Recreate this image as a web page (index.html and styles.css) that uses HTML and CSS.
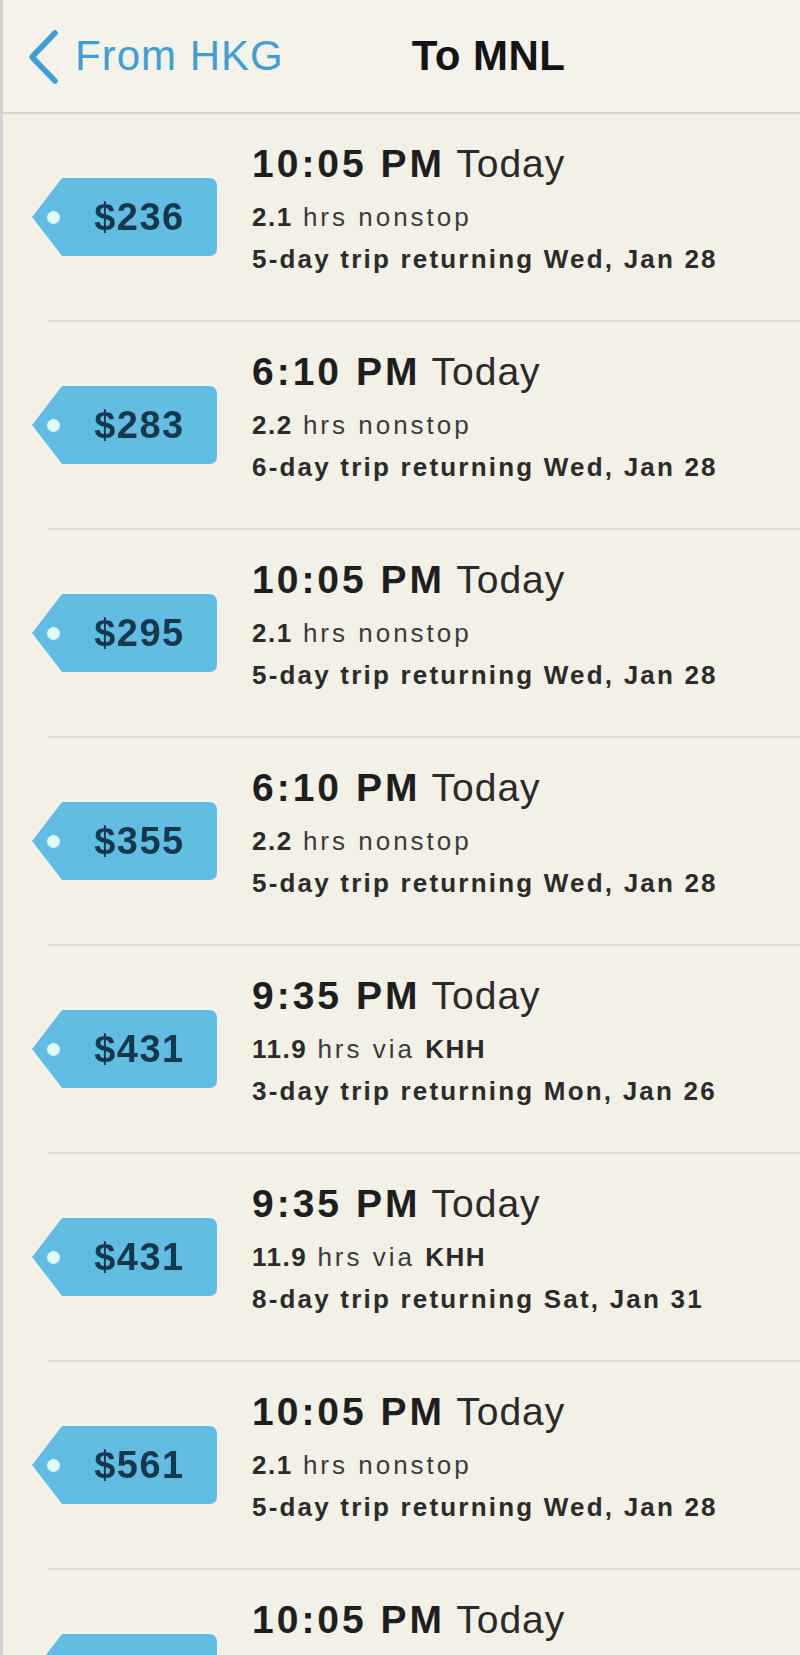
FILE: index.html
```html
<!DOCTYPE html>
<html lang="en">
<head>
<meta charset="utf-8">
<title>To MNL</title>
<link rel="stylesheet" href="styles.css">
</head>
<body>
<div class="app">
  <header class="nav">
    <a class="back">
      <svg class="chev" width="32" height="56" viewBox="0 0 32 56"><path d="M28 4 L5 28 L28 52" fill="none" stroke="#3d9fd8" stroke-width="5.5" stroke-linecap="round" stroke-linejoin="round"/></svg>
      <span class="back-label">From HKG</span>
    </a>
    <h1 class="nav-title">To MNL</h1>
  </header>

  <ul class="list">
    <li class="row">
      <div class="tag-wrap"><div class="tag"><span class="price">$236</span></div></div>
      <div class="info">
        <div class="time"><b>10:05 PM</b><span class="day"> Today</span></div>
        <div class="dur"><b>2.1</b><span class="rg"> hrs nonstop</span></div>
        <div class="trip">5-day trip returning Wed, Jan 28</div>
      </div>
    </li>
    <li class="row">
      <div class="tag-wrap"><div class="tag"><span class="price">$283</span></div></div>
      <div class="info">
        <div class="time"><b>6:10 PM</b><span class="day"> Today</span></div>
        <div class="dur"><b>2.2</b><span class="rg"> hrs nonstop</span></div>
        <div class="trip">6-day trip returning Wed, Jan 28</div>
      </div>
    </li>
    <li class="row">
      <div class="tag-wrap"><div class="tag"><span class="price">$295</span></div></div>
      <div class="info">
        <div class="time"><b>10:05 PM</b><span class="day"> Today</span></div>
        <div class="dur"><b>2.1</b><span class="rg"> hrs nonstop</span></div>
        <div class="trip">5-day trip returning Wed, Jan 28</div>
      </div>
    </li>
    <li class="row">
      <div class="tag-wrap"><div class="tag"><span class="price">$355</span></div></div>
      <div class="info">
        <div class="time"><b>6:10 PM</b><span class="day"> Today</span></div>
        <div class="dur"><b>2.2</b><span class="rg"> hrs nonstop</span></div>
        <div class="trip">5-day trip returning Wed, Jan 28</div>
      </div>
    </li>
    <li class="row">
      <div class="tag-wrap"><div class="tag"><span class="price">$431</span></div></div>
      <div class="info">
        <div class="time"><b>9:35 PM</b><span class="day"> Today</span></div>
        <div class="dur"><b>11.9</b><span class="rg"> hrs via </span><b>KHH</b></div>
        <div class="trip">3-day trip returning Mon, Jan 26</div>
      </div>
    </li>
    <li class="row">
      <div class="tag-wrap"><div class="tag"><span class="price">$431</span></div></div>
      <div class="info">
        <div class="time"><b>9:35 PM</b><span class="day"> Today</span></div>
        <div class="dur"><b>11.9</b><span class="rg"> hrs via </span><b>KHH</b></div>
        <div class="trip">8-day trip returning Sat, Jan 31</div>
      </div>
    </li>
    <li class="row">
      <div class="tag-wrap"><div class="tag"><span class="price">$561</span></div></div>
      <div class="info">
        <div class="time"><b>10:05 PM</b><span class="day"> Today</span></div>
        <div class="dur"><b>2.1</b><span class="rg"> hrs nonstop</span></div>
        <div class="trip">5-day trip returning Wed, Jan 28</div>
      </div>
    </li>
    <li class="row">
      <div class="tag-wrap"><div class="tag"><span class="price">$561</span></div></div>
      <div class="info">
        <div class="time"><b>10:05 PM</b><span class="day"> Today</span></div>
        <div class="dur"><b>2.1</b><span class="rg"> hrs nonstop</span></div>
        <div class="trip">5-day trip returning Wed, Jan 28</div>
      </div>
    </li>
  </ul>
</div>
</body>
</html>
```

FILE: styles.css
```css
* { box-sizing: border-box; }

html, body {
  margin: 0;
  padding: 0;
  background: #f3f0e6;
}

body {
  font-family: "Liberation Sans", Arial, sans-serif;
  color: #222;
}

.app {
  width: 800px;
  height: 1655px;
  overflow: hidden;
  border-left: 3px solid #d4d3cf;
  background: #f3f0e6;
}

/* Navigation bar */
.nav {
  height: 114px;
  display: flex;
  align-items: center;
  background: #f5f2ea;
  border-bottom: 2px solid #d8d5cb;
}

.back {
  display: flex;
  align-items: center;
  margin-left: 24px;
  color: #3d9fd8;
}

.chev {
  display: block;
  margin-top: 2px;
}

.back-label {
  margin-left: 16px;
  font-size: 42px;
  letter-spacing: 1px;
}

.nav-title {
  margin: 0 0 0 128px;
  font-size: 42px;
  font-weight: 700;
  letter-spacing: 0.5px;
  color: #141414;
}

/* List */
.list {
  list-style: none;
  margin: 0;
  padding: 0;
}

.row {
  height: 208px;
  display: flex;
  align-items: flex-start;
  padding-bottom: 2px;
  background-image: linear-gradient(#e0dcd1, #e0dcd1);
  background-repeat: no-repeat;
  background-position: 45px 100%;
  background-size: calc(100% - 45px) 2px;
}

.tag-wrap {
  align-self: center;
  margin-left: 29px;
  filter: drop-shadow(0 0 1.5px #fbfdfc);
}

.tag {
  width: 185px;
  height: 78px;
  display: flex;
  align-items: center;
  background: #62bde3;
  border-radius: 0 7px 7px 0;
  clip-path: polygon(30px 0, 100% 0, 100% 100%, 30px 100%, 0 50%);
}

.tag::before {
  content: "";
  flex: none;
  width: 13px;
  height: 13px;
  margin-left: 15px;
  border-radius: 50%;
  background: #e3f7fc;
}

.price {
  flex: 1;
  margin-left: 2px;
  text-align: center;
  font-size: 38px;
  font-weight: 700;
  letter-spacing: 1.5px;
  color: #15384c;
}

.info {
  margin-left: 35px;
  padding-top: 24px;
}

.time {
  font-size: 39px;
  line-height: 52px;
  margin-bottom: 6px;
  color: #1e1e1e;
  white-space: nowrap;
}

.time b {
  font-weight: 700;
  letter-spacing: 3px;
}

.time .day {
  letter-spacing: 1px;
  color: #2a2a2a;
}

.dur, .trip {
  font-size: 26px;
  line-height: 42px;
  white-space: nowrap;
  color: #2b2b2b;
}

.dur b {
  font-weight: 700;
  letter-spacing: 1.5px;
}

.dur .rg {
  letter-spacing: 3px;
  color: #3a3a3a;
}

.trip {
  font-weight: 700;
  letter-spacing: 2.2px;
}
```
